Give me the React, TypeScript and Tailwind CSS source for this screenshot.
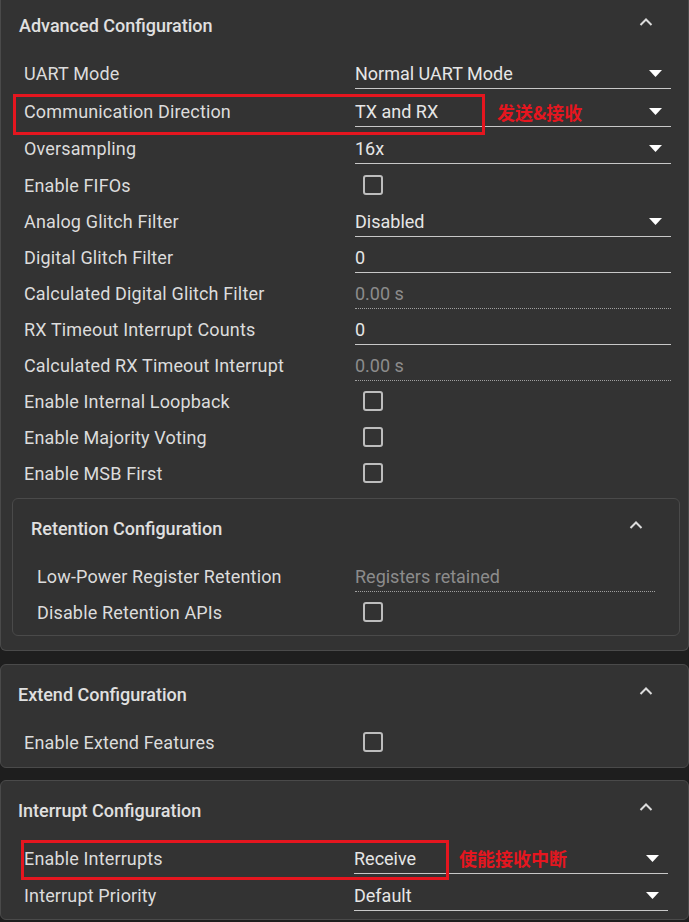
import React from "react";

const Caret = () => (
  <svg width="14" height="8" viewBox="0 0 14 8" className="-mt-[7px]">
    <polyline points="1.5,7 7,1.5 12.5,7" fill="none" stroke="#dcdcdc" strokeWidth="2" />
  </svg>
);

const Triangle = () => (
  <svg width="13" height="7" viewBox="0 0 13 7" className="absolute right-[9px] top-[11px]">
    <polygon points="0,0 13,0 6.5,7" fill="#ffffff" />
  </svg>
);

const Checkbox = () => (
  <div className="ml-2 h-[20px] w-[20px] rounded-[3px] border-2 border-[#bdbdbd]" />
);

type RowProps = {
  label: string;
  h?: string;
  labelW?: string;
  children?: React.ReactNode;
  extra?: React.ReactNode;
};

const Row = ({ label, h = "h-[36px]", labelW = "grid-cols-[331px_1fr]", children, extra }: RowProps) => (
  <div className={`relative grid ${labelW} ${h} items-center`}>
    <span className="mt-[2px] text-[18px] leading-[30px] tracking-[0.15px] text-[#dcdcdc]">{label}</span>
    <div className="flex items-center">{children}</div>
    {extra}
  </div>
);

const Select = ({ value }: { value: string }) => (
  <div className="relative mt-[2px] flex h-[30px] w-full items-center border-b border-[#c8c8c8] text-[18px] text-[#e6e6e6]">
    {value}
    <Triangle />
  </div>
);

const Input = ({ value }: { value: string }) => (
  <div className="mt-[2px] flex h-[30px] w-full items-center border-b border-[#c8c8c8] text-[18px] text-[#e6e6e6]">
    {value}
  </div>
);

const ReadOnly = ({ value }: { value: string }) => (
  <div className="mt-[2px] flex h-[30px] w-full items-center border-b border-dotted border-[#a0a0a0] text-[18px] text-[#8c8c8c]">
    {value}
  </div>
);

const RedBox = ({ className }: { className: string }) => (
  <div className={`pointer-events-none absolute border-[3px] border-[#e5161f] ${className}`} />
);

const RedNote = ({ text, className }: { text: string; className: string }) => (
  <span
    className={`absolute text-[18px] font-bold leading-none text-[#e5161f] font-['Noto_Sans_CJK_SC',sans-serif] ${className}`}
  >
    {text}
  </span>
);

export default function App() {
  return (
    <div className="h-[922px] overflow-hidden bg-[#1e1e1e] font-['Roboto',sans-serif]">
      {/* Advanced Configuration */}
      <section className="rounded-b-[6px] border border-t-0 border-[#4a4a4a] bg-[#333333]">
        <div className="flex h-[50px] items-center justify-between pl-[18px] pr-[35px]">
          <h2 className="text-[18px] font-medium text-[#e0e0e0]">Advanced Configuration</h2>
          <Caret />
        </div>
        <div className="pl-[23px] pr-[17px] pt-[4px]">
          <Row label="UART Mode" h="h-[38px]">
            <Select value="Normal UART Mode" />
          </Row>
          <Row
            label="Communication Direction"
            h="h-[37px]"
            extra={
              <>
                <RedBox className="-left-[11px] top-[2px] h-[41px] w-[472px]" />
                <RedNote text="发送&接收" className="left-[473px] top-[11px]" />
              </>
            }
          >
            <Select value="TX and RX" />
          </Row>
          <Row label="Oversampling" h="h-[37px]">
            <Select value="16x" />
          </Row>
          <Row label="Enable FIFOs" h="h-[37px]">
            <Checkbox />
          </Row>
          <Row label="Analog Glitch Filter">
            <Select value="Disabled" />
          </Row>
          <Row label="Digital Glitch Filter">
            <Input value="0" />
          </Row>
          <Row label="Calculated Digital Glitch Filter">
            <ReadOnly value="0.00 s" />
          </Row>
          <Row label="RX Timeout Interrupt Counts">
            <Input value="0" />
          </Row>
          <Row label="Calculated RX Timeout Interrupt">
            <ReadOnly value="0.00 s" />
          </Row>
          <Row label="Enable Internal Loopback">
            <Checkbox />
          </Row>
          <Row label="Enable Majority Voting">
            <Checkbox />
          </Row>
          <Row label="Enable MSB First">
            <Checkbox />
          </Row>
        </div>

        {/* Retention Configuration */}
        <div className="ml-[11px] mr-[8px] mt-[7px] mb-[14px] rounded-[6px] border border-[#4a4a4a] bg-[#323232]">
          <div className="flex h-[58px] items-center justify-between pl-[18px] pr-[36px]">
            <h3 className="text-[18px] font-medium text-[#e0e0e0]">Retention Configuration</h3>
            <Caret />
          </div>
          <div className="pb-[6px] pl-[24px] pr-[24px] pt-[1px]">
            <Row label="Low-Power Register Retention" labelW="grid-cols-[318px_1fr]">
              <ReadOnly value="Registers retained" />
            </Row>
            <Row label="Disable Retention APIs" h="h-[35px]" labelW="grid-cols-[318px_1fr]">
              <Checkbox />
            </Row>
          </div>
        </div>
      </section>

      {/* Extend Configuration */}
      <section className="mt-[13px] rounded-[6px] border border-[#4a4a4a] bg-[#333333]">
        <div className="flex h-[58px] items-center justify-between pl-[17px] pr-[35px]">
          <h2 className="text-[18px] font-medium text-[#e0e0e0]">Extend Configuration</h2>
          <Caret />
        </div>
        <div className="pb-[7px] pl-[23px] pr-[17px] pt-[1px]">
          <Row label="Enable Extend Features">
            <Checkbox />
          </Row>
        </div>
      </section>

      {/* Interrupt Configuration */}
      <section className="mt-[12px] rounded-[6px] border border-[#4a4a4a] bg-[#333333]">
        <div className="flex h-[58px] items-center justify-between pl-[17px] pr-[35px]">
          <h2 className="text-[18px] font-medium text-[#e0e0e0]">Interrupt Configuration</h2>
          <Caret />
        </div>
        <div className="pb-[6px] pl-[23px] pr-[20px] pt-[1px]">
          <Row
            label="Enable Interrupts"
            labelW="grid-cols-[330px_1fr]"
            extra={
              <>
                <RedBox className="-left-[3px] top-0 h-[40px] w-[428px]" />
                <RedNote text="使能接收中断" className="left-[435px] top-[9px]" />
              </>
            }
          >
            <Select value="Receive" />
          </Row>
          <Row label="Interrupt Priority" h="h-[37px]" labelW="grid-cols-[330px_1fr]">
            <Select value="Default" />
          </Row>
        </div>
      </section>
    </div>
  );
}
